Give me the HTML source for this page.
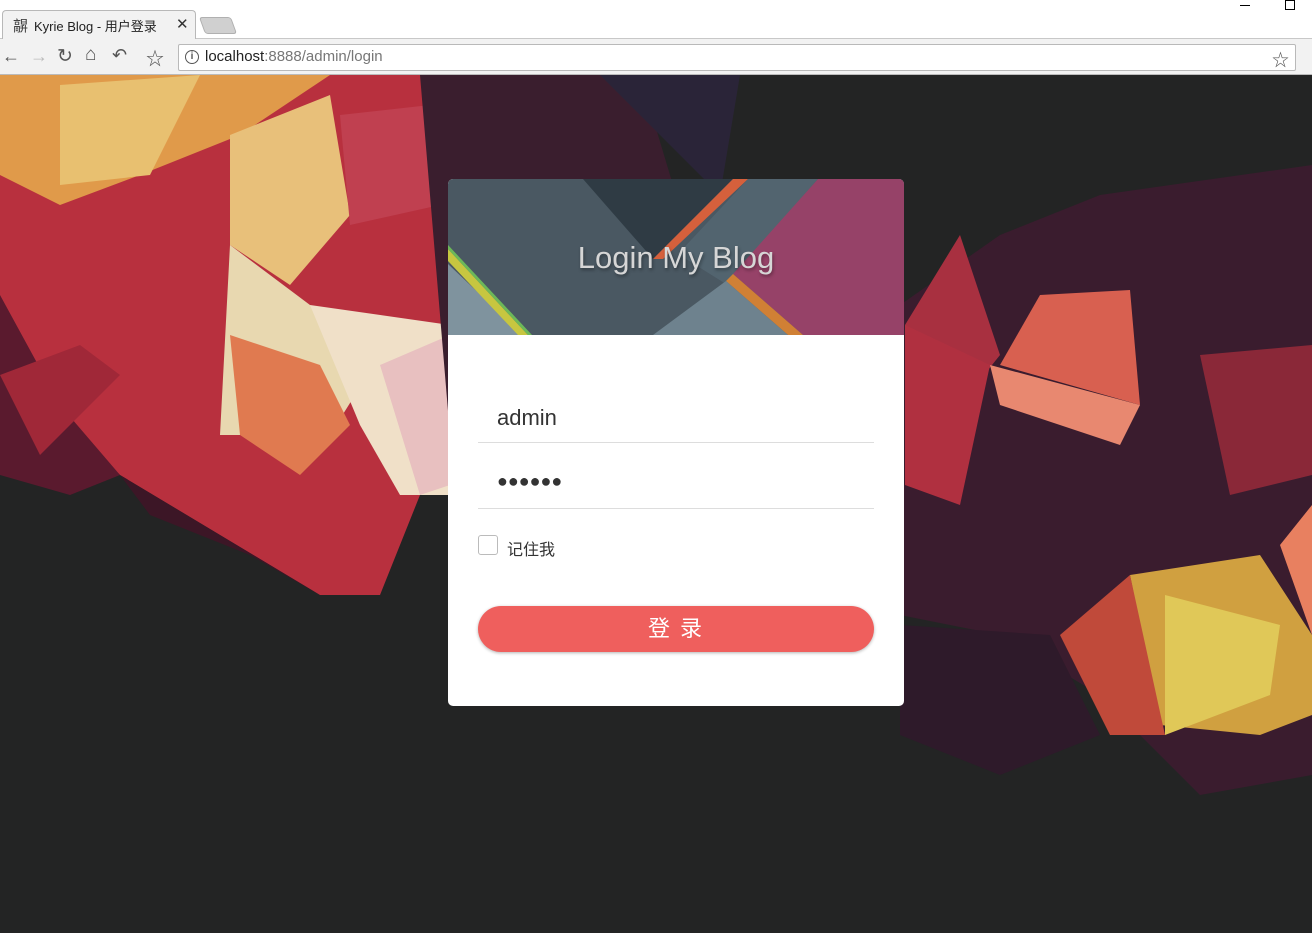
<!DOCTYPE html>
<html><head><meta charset="utf-8"><style>
*{margin:0;padding:0;box-sizing:border-box}
body{width:1312px;height:933px;overflow:hidden;background:#232424;font-family:"Liberation Sans","Noto Sans CJK SC",sans-serif;position:relative}
.chrome{position:absolute;left:0;top:0;width:1312px;height:75px;background:#fff}
.tabbar{position:absolute;left:0;top:0;width:1312px;height:39px;background:#fff;border-bottom:1px solid #c8c8c8}
.tab{position:absolute;left:2px;top:10px;width:194px;height:30px;background:#f2f2f2;border:1px solid #b8b8b8;border-bottom:none;border-radius:4px 4px 0 0}
.tabt{position:absolute;left:34px;top:16px;font-size:13px;color:#222}
.toolbar{position:absolute;left:0;top:39px;width:1312px;height:36px;background:#f2f2f2;border-bottom:1px solid #bbb}
.omni{position:absolute;left:178px;top:44px;width:1118px;height:27px;background:#fff;border:1px solid #b9b9b9;border-radius:2px}
.url{position:absolute;left:205px;top:48px;font-size:15px;color:#222}
.url span{color:#777}
.card{position:absolute;left:448px;top:179px;width:456px;height:527px;background:#fff;border-radius:5px;overflow:hidden}
.title{position:absolute;left:0;top:61px;width:456px;text-align:center;font-size:31px;color:#d6d6d6;text-shadow:1px 2px 3px rgba(0,0,0,.35)}
.field{position:absolute;left:30px;width:396px;border-bottom:1px solid #ddd;font-size:22px;color:#333;padding-left:19px}
.btn{position:absolute;left:30px;top:427px;width:396px;height:46px;background:#ef5f5d;border-radius:23px;color:#fff;font-size:22px;text-align:center;line-height:46px;letter-spacing:2px;box-shadow:0 1px 3px rgba(0,0,0,.3)}
</style></head><body>
<svg style="position:absolute;left:0;top:75px" width="1312" height="858">
<polygon points="0,0 430,0 440,80 450,270 420,420 380,520 320,520 220,460 120,400 50,330 0,330" fill="#b8303e"/>
<polygon points="0,0 330,0 240,60 140,100 60,130 0,100" fill="#e09a4a"/>
<polygon points="60,10 200,0 150,100 60,110" fill="#e8c070"/>
<polygon points="230,60 330,20 350,140 290,210 230,170" fill="#e8c07a"/>
<polygon points="230,170 310,230 380,280 330,360 220,360" fill="#e8d8b0"/>
<polygon points="310,230 450,250 450,420 400,420 360,350" fill="#f0e0c8"/>
<polygon points="380,290 450,260 450,410 420,420" fill="#e8c0c0"/>
<polygon points="340,40 430,30 440,130 350,150" fill="#c04050"/>
<polygon points="0,220 60,330 120,400 70,420 0,400" fill="#5a1a2e"/>
<polygon points="120,400 220,460 320,520 250,480 150,440" fill="#3c1626"/>
<polygon points="230,260 320,290 350,350 300,400 240,360" fill="#e07a50"/>
<polygon points="0,300 80,270 120,300 40,380" fill="#a02838"/>
<polygon points="420,0 640,0 700,200 600,380 450,360" fill="#3a1e2e"/>
<polygon points="600,0 740,0 720,120" fill="#2a2438"/>
<polygon points="900,230 1000,160 1100,120 1312,90 1312,700 1200,720 1100,620 1000,560 900,540" fill="#3a1c2e"/>
<polygon points="905,250 960,160 1000,280 960,330" fill="#a83040"/>
<polygon points="1040,220 1130,215 1140,330 1000,290" fill="#d86050"/>
<polygon points="990,290 1140,330 1120,370 1000,330" fill="#e88870"/>
<polygon points="905,250 990,290 960,430 905,410" fill="#b03040"/>
<polygon points="1200,280 1312,270 1312,400 1230,420" fill="#8a2838"/>
<polygon points="1130,500 1260,480 1312,560 1312,640 1260,660 1160,650" fill="#d0a040"/>
<polygon points="1165,520 1280,550 1270,620 1165,660" fill="#e0c858"/>
<polygon points="1060,560 1130,500 1165,660 1110,660" fill="#c04a3a"/>
<polygon points="900,550 1050,560 1100,660 1000,700 900,660" fill="#2e1a2a"/>
<polygon points="1280,470 1312,430 1312,560" fill="#e88060"/>
</svg>
<div class="chrome"></div>
<div class="tabbar"></div>
<div class="tab"></div>
<div style="position:absolute;left:202px;top:17px;width:32px;height:17px;background:#d0d0d0;border:1px solid #b0b0b0;border-radius:3px;transform:skewX(20deg)"></div>
<div style="position:absolute;left:13px;top:15px;font-size:15px;color:#444">髜</div>
<div class="tabt">Kyrie Blog - 用户登录</div>
<div style="position:absolute;left:176px;top:15px;font-size:15px;color:#333">✕</div>
<div style="position:absolute;left:1240px;top:5px;width:10px;border-top:1px solid #000"></div>
<div style="position:absolute;left:1285px;top:0px;width:10px;height:10px;border:1px solid #000"></div>
<div class="toolbar"></div>
<div style="position:absolute;left:2px;top:46px;font-size:18px;color:#555">←</div>
<div style="position:absolute;left:30px;top:46px;font-size:18px;color:#bbb">→</div>
<div style="position:absolute;left:57px;top:45px;font-size:19px;color:#555">↻</div>
<div style="position:absolute;left:85px;top:44px;font-size:19px;color:#555">⌂</div>
<div style="position:absolute;left:112px;top:45px;font-size:18px;color:#555">↶</div>
<div style="position:absolute;left:146px;top:45px;font-size:18px;color:#555">☆</div>
<div class="omni"></div>
<div style="position:absolute;left:185px;top:50px;width:14px;height:14px;border:1.5px solid #555;border-radius:50%;font-size:10px;text-align:center;line-height:11px;color:#555;font-weight:bold">i</div>
<div class="url">localhost<span>:8888/admin/login</span></div>
<div style="position:absolute;left:1272px;top:46px;font-size:17px;color:#555">☆</div>
<div class="card">
<svg width="456" height="156" style="position:absolute;left:0;top:0">
<rect width="456" height="156" fill="#4a5862"/>
<polygon points="135,0 285,0 205,80" fill="#2f3b44"/>
<polygon points="285,0 300,0 215,80 205,80" fill="#d5603c"/>
<polygon points="300,0 370,0 278,105 230,75" fill="#52646f"/>
<polygon points="370,0 456,0 456,156 355,156 285,95" fill="#964268"/>
<polygon points="285,95 355,156 340,156 278,102" fill="#d08035"/>
<polygon points="278,102 340,156 205,156" fill="#6e828e"/>
<polygon points="0,85 75,156 0,156" fill="#7f939e"/>
<polygon points="0,70 80,156 70,156 0,82" fill="#c7c640"/>
<polygon points="0,66 84,156 80,156 0,70" fill="#6cb859"/>
</svg>
<div class="title">Login My Blog</div>
<div class="field" style="top:226px;height:38px">admin</div>
<div class="field" style="top:292px;height:38px;font-size:18px;letter-spacing:0px">●●●●●●</div>
<div style="position:absolute;left:30px;top:356px;width:20px;height:20px;border:1px solid #bbb;border-radius:3px"></div>
<div style="position:absolute;left:59px;top:357px;font-size:16px;color:#333">记住我</div>
<div class="btn">登 录</div>
</div>
</body></html>
